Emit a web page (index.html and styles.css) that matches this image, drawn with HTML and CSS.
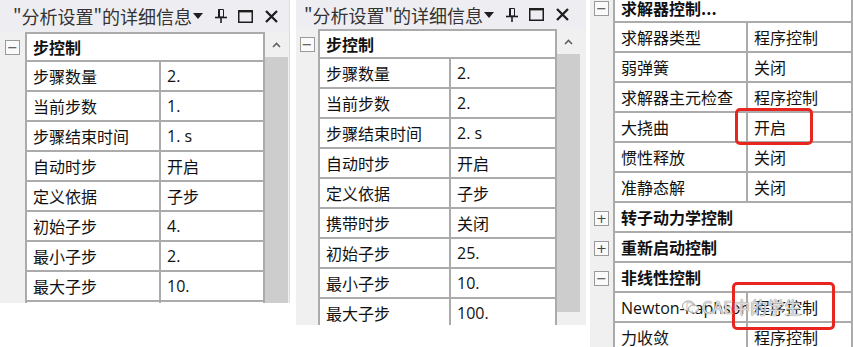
FILE: index.html
```html
<!DOCTYPE html>
<html lang="zh-CN">
<head>
    <meta charset="UTF-8">
    <meta name="viewport" content="width=device-width, initial-scale=1.0">
    <title>分析设置 详细信息</title>
    <link rel="stylesheet" href="styles.css">
</head>
<body>
    <div class="screen">

        <!-- 第一个面板 -->
        <div class="panel panel-a">
            <div class="titlebar">
                <span class="title">"分析设置"的详细信息</span>
                <svg class="ic-drop" width="10" height="6" viewBox="0 0 10 6"><path d="M0 0h10L5 6z" fill="#1e1e1e"/></svg>
                <svg class="ic-pin" width="12" height="14" viewBox="0 0 12 14"><path d="M3.5 0.5h5v7.5h-5z" fill="none" stroke="#1e1e1e"/><path d="M4 0.5v7.5" stroke="#1e1e1e" stroke-width="2"/><path d="M0 8.5h12" stroke="#1e1e1e" stroke-width="1.6"/><path d="M6 9v5" stroke="#1e1e1e" stroke-width="1.6"/></svg>
                <svg class="ic-max" width="15" height="13" viewBox="0 0 15 13"><path d="M0.75 1h13.5v11.25h-13.5z" fill="none" stroke="#1e1e1e" stroke-width="1.5"/><path d="M0 1.2h15" stroke="#1e1e1e" stroke-width="2.4"/></svg>
                <svg class="ic-close" width="13" height="13" viewBox="0 0 13 13"><path d="M1 1l11 11M12 1L1 12" stroke="#1e1e1e" stroke-width="2.3"/></svg>
            </div>
            <div class="body">
                <div class="sheet">
                    <div class="row group"><div class="gut"><span class="tog">−</span></div><div class="head">步控制</div></div>
                    <div class="row"><div class="gut"></div><div class="name">步骤数量</div><div class="val">2.</div></div>
                    <div class="row"><div class="gut"></div><div class="name">当前步数</div><div class="val">1.</div></div>
                    <div class="row"><div class="gut"></div><div class="name">步骤结束时间</div><div class="val">1. s</div></div>
                    <div class="row"><div class="gut"></div><div class="name">自动时步</div><div class="val">开启</div></div>
                    <div class="row"><div class="gut"></div><div class="name">定义依据</div><div class="val">子步</div></div>
                    <div class="row"><div class="gut"></div><div class="name">初始子步</div><div class="val">4.</div></div>
                    <div class="row"><div class="gut"></div><div class="name">最小子步</div><div class="val">2.</div></div>
                    <div class="row"><div class="gut"></div><div class="name">最大子步</div><div class="val">10.</div></div>
                    <div class="row"><div class="gut"></div><div class="name"></div><div class="val"></div></div>
                </div>
                <div class="scroll">
                    <div class="arrow"><svg width="9" height="6" viewBox="0 0 9 6"><path d="M1 5l3.5-3.5L8 5" fill="none" stroke="#606060" stroke-width="1.6"/></svg></div>
                    <div class="thumb"></div>
                </div>
            </div>
        </div>

        <!-- 第二个面板 -->
        <div class="panel panel-b">
            <div class="titlebar">
                <span class="title">"分析设置"的详细信息</span>
                <svg class="ic-drop" width="10" height="6" viewBox="0 0 10 6"><path d="M0 0h10L5 6z" fill="#1e1e1e"/></svg>
                <svg class="ic-pin" width="12" height="14" viewBox="0 0 12 14"><path d="M3.5 0.5h5v7.5h-5z" fill="none" stroke="#1e1e1e"/><path d="M4 0.5v7.5" stroke="#1e1e1e" stroke-width="2"/><path d="M0 8.5h12" stroke="#1e1e1e" stroke-width="1.6"/><path d="M6 9v5" stroke="#1e1e1e" stroke-width="1.6"/></svg>
                <svg class="ic-max" width="15" height="13" viewBox="0 0 15 13"><path d="M0.75 1h13.5v11.25h-13.5z" fill="none" stroke="#1e1e1e" stroke-width="1.5"/><path d="M0 1.2h15" stroke="#1e1e1e" stroke-width="2.4"/></svg>
                <svg class="ic-close" width="13" height="13" viewBox="0 0 13 13"><path d="M1 1l11 11M12 1L1 12" stroke="#1e1e1e" stroke-width="2.3"/></svg>
            </div>
            <div class="body">
                <div class="sheet">
                    <div class="row group"><div class="gut"><span class="tog">−</span></div><div class="head">步控制</div></div>
                    <div class="row"><div class="gut"></div><div class="name">步骤数量</div><div class="val">2.</div></div>
                    <div class="row"><div class="gut"></div><div class="name">当前步数</div><div class="val">2.</div></div>
                    <div class="row"><div class="gut"></div><div class="name">步骤结束时间</div><div class="val">2. s</div></div>
                    <div class="row"><div class="gut"></div><div class="name">自动时步</div><div class="val">开启</div></div>
                    <div class="row"><div class="gut"></div><div class="name">定义依据</div><div class="val">子步</div></div>
                    <div class="row"><div class="gut"></div><div class="name">携带时步</div><div class="val">关闭</div></div>
                    <div class="row"><div class="gut"></div><div class="name">初始子步</div><div class="val">25.</div></div>
                    <div class="row"><div class="gut"></div><div class="name">最小子步</div><div class="val">10.</div></div>
                    <div class="row"><div class="gut"></div><div class="name">最大子步</div><div class="val">100.</div></div>
                </div>
                <div class="scroll">
                    <div class="arrow"><svg width="9" height="6" viewBox="0 0 9 6"><path d="M1 5l3.5-3.5L8 5" fill="none" stroke="#606060" stroke-width="1.6"/></svg></div>
                    <div class="thumb"></div>
                </div>
            </div>
        </div>

        <!-- 第三个面板 -->
        <div class="panel panel-c">
            <div class="body">
                <div class="sheet">
                    <div class="row group"><div class="gut"><span class="tog">−</span></div><div class="head">求解器控制...</div></div>
                    <div class="row"><div class="gut"></div><div class="name">求解器类型</div><div class="val">程序控制</div></div>
                    <div class="row"><div class="gut"></div><div class="name">弱弹簧</div><div class="val">关闭</div></div>
                    <div class="row"><div class="gut"></div><div class="name">求解器主元检查</div><div class="val">程序控制</div></div>
                    <div class="row"><div class="gut"></div><div class="name">大挠曲</div><div class="val">开启</div></div>
                    <div class="row"><div class="gut"></div><div class="name">惯性释放</div><div class="val">关闭</div></div>
                    <div class="row"><div class="gut"></div><div class="name">准静态解</div><div class="val">关闭</div></div>
                    <div class="row group"><div class="gut"><span class="tog">+</span></div><div class="head">转子动力学控制</div></div>
                    <div class="row group"><div class="gut"><span class="tog">+</span></div><div class="head">重新启动控制</div></div>
                    <div class="row group"><div class="gut"><span class="tog">−</span></div><div class="head">非线性控制</div></div>
                    <div class="row"><div class="gut"></div><div class="name">Newton-Raphson选项</div><div class="val">程序控制</div></div>
                    <div class="row"><div class="gut"></div><div class="name">力收敛</div><div class="val">程序控制</div></div>
                </div>
            </div>

            <!-- 标注与水印 -->
            <div class="mark mark-1"></div>
            <div class="mark mark-2"></div>
            <div class="watermark">
                <svg width="17" height="14" viewBox="0 0 17 14"><ellipse cx="6.5" cy="6" rx="6" ry="5" fill="rgba(255,255,255,0.8)" stroke="#a0a0a0"/><ellipse cx="11.5" cy="9" rx="5" ry="4" fill="rgba(255,255,255,0.8)" stroke="#a0a0a0"/></svg>
                <span>CAE中的学生</span>
            </div>
        </div>

    </div>
</body>
</html>
```

FILE: styles.css
```css
body {
    margin: 0;
    background-color: #fff;
    font-family: "Open Sans", "Noto Sans CJK SC", sans-serif;
    color: #111;
}

.screen {
    display: flex;
    align-items: flex-start;
    width: 853px;
    height: 347px;
    overflow: hidden;
}

.panel {
    display: flex;
    flex-direction: column;
    flex-shrink: 0;
    background-color: #f0f0f0;
    overflow: hidden;
}

.panel-a {
    width: 290px;
    height: 303px;
    border-right: 1px solid #dedede;
    box-sizing: border-box;
    --gut: 25px;
    --name: 134px;
    --val: 106px;
}

.panel-b {
    width: 290px;
    height: 325px;
    margin-left: 6px;
    --gut: 22px;
    --name: 131px;
    --val: 108px;
}

.panel-c {
    position: relative;
    width: 263px;
    height: 347px;
    margin-left: 4px;
    --gut: 23px;
    --name: 133px;
    --val: 107px;
}

/* 标题栏 */
.titlebar {
    display: flex;
    align-items: center;
    height: 32px;
    padding-left: 13px;
    background-color: #eeeef2;
    flex-shrink: 0;
}

.panel-b .titlebar {
    height: 29px;
    padding-left: 8px;
}

.title {
    font-family: "Noto Sans CJK SC", sans-serif;
    font-size: 18px;
    color: #333;
    white-space: nowrap;
}

.ic-drop {
    margin-left: 1px;
}

.ic-pin {
    margin-left: 12px;
}

.ic-max {
    margin-left: 11px;
}

.ic-close {
    margin-left: 12px;
}

/* 内容区 */
.body {
    display: flex;
    flex: 1;
    min-height: 0;
}

.sheet {
    display: flex;
    flex-direction: column;
    flex-shrink: 0;
}

.panel-c .sheet {
    margin-top: -7px;
}

.row {
    display: grid;
    grid-template-columns: var(--gut) var(--name) var(--val);
    height: 30px;
    flex-shrink: 0;
}

.row:first-child .head {
    border-top: 2px solid #ababab;
}

.gut {
    display: flex;
    align-items: center;
    justify-content: center;
    background-color: #f0f0f0;
}

.tog {
    display: flex;
    align-items: center;
    justify-content: center;
    width: 13px;
    height: 13px;
    border: 1px solid #9a9a9a;
    background-color: #fafafa;
    color: #444;
    font-family: "DejaVu Sans", sans-serif;
    font-size: 13px;
    line-height: 1;
}

.name, .val, .head {
    display: flex;
    align-items: center;
    padding-left: 6px;
    background-color: #fff;
    border-left: 2px solid #ababab;
    border-bottom: 2px solid #ababab;
    font-size: 16px;
    white-space: nowrap;
    overflow: hidden;
    box-sizing: border-box;
}

.val {
    border-right: 2px solid #ababab;
}

.head {
    grid-column: 2 / 4;
    border-right: 2px solid #ababab;
    font-weight: 700;
    font-family: "Noto Sans CJK SC", sans-serif;
}

/* 滚动条 */
.scroll {
    display: flex;
    flex-direction: column;
    width: 23px;
    flex-shrink: 0;
}

.panel-b .scroll {
    padding-right: 6px;
}

.arrow {
    display: flex;
    align-items: center;
    justify-content: center;
    height: 25px;
    flex-shrink: 0;
}

.thumb {
    flex: 1;
    background-color: #cdcdcd;
}

.panel-b .thumb {
    flex: none;
    height: 258px;
}

/* 红色标注 */
.mark {
    position: absolute;
    border: 3px solid #e8251f;
    border-radius: 5px;
}

.mark-1 {
    left: 145px;
    top: 108px;
    width: 72px;
    height: 31px;
}

.mark-2 {
    left: 142px;
    top: 282px;
    width: 97px;
    height: 42px;
}

.watermark {
    position: absolute;
    left: 92px;
    top: 294px;
    display: flex;
    align-items: center;
    gap: 3px;
    font-family: "Noto Sans CJK SC", sans-serif;
    font-size: 17px;
    color: rgba(255, 255, 255, 0.7);
    text-shadow: 0 0 1px #888, 0 0 1px #888;
    white-space: nowrap;
}
```
